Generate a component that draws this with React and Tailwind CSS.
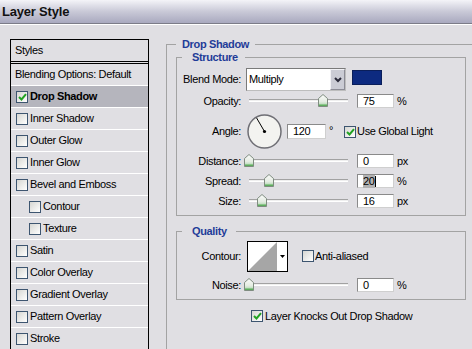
import React from 'react';

const styles = [
  { t: 'Drop Shadow', on: true, sel: true },
  { t: 'Inner Shadow' },
  { t: 'Outer Glow' },
  { t: 'Inner Glow' },
  { t: 'Bevel and Emboss' },
  { t: 'Contour', sub: true },
  { t: 'Texture', sub: true },
  { t: 'Satin' },
  { t: 'Color Overlay' },
  { t: 'Gradient Overlay' },
  { t: 'Pattern Overlay' },
  { t: 'Stroke' },
];

function Box({ on }) {
  return (
    <span className="w-[12px] h-[12px] shrink-0 border border-[#3d5570] bg-linear-to-br from-[#d6d6d2] to-white flex items-center justify-center">
      {on && (
        <svg width="9" height="8" viewBox="0 0 9 8">
          <path d="M1 4 L3.5 6.5 L8 1.2" fill="none" stroke="#22a323" strokeWidth="2" />
        </svg>
      )}
    </span>
  );
}

function Thumb() {
  return (
    <svg width="10" height="13" viewBox="0 0 10 13">
      <defs>
        <linearGradient id="thumbg" x1="0" y1="0" x2="0" y2="1">
          <stop offset="0" stopColor="#fbfbfa" />
          <stop offset="0.6" stopColor="#e4ece2" />
          <stop offset="1" stopColor="#9fd09f" />
        </linearGradient>
      </defs>
      <path d="M5 0.5 L9.5 4.5 V12.5 H0.5 V4.5 Z" fill="url(#thumbg)" stroke="#7f8c80" />
      <rect x="1" y="10.5" width="8" height="1.5" fill="#5fae5f" />
    </svg>
  );
}

function Slider({ at }) {
  return (
    <div className="relative ml-[3px] w-[104px] h-[14px] shrink-0">
      <div className="absolute left-[5px] right-0 top-[5px] h-[3px] border-t border-[#a2a2a2] border-b border-b-white bg-[#efefef]" />
      <div className="absolute top-0" style={{ left: Math.round(at * 99) }}>
        <Thumb />
      </div>
    </div>
  );
}

function Field({ w = 'w-[37px]', children, className = '' }) {
  return (
    <div className={`${w} h-[14px] shrink-0 bg-white border border-[#8a8a8a] border-b-[#cfcfcf] border-r-[#cfcfcf] pl-[5px] flex items-center ${className}`}>
      {children}
    </div>
  );
}

function Row({ label, className = '', children }) {
  return (
    <div className={`flex items-center ${className}`}>
      <div className="w-[64px] text-right shrink-0">{label}</div>
      {children}
    </div>
  );
}

function SliderRow({ label, at, value, unit, className }) {
  return (
    <Row label={label} className={`h-[14px] ${className}`}>
      <Slider at={at} />
      <Field className="ml-[9px]">{value}</Field>
      <span className="ml-[3px]">{unit}</span>
    </Row>
  );
}

export default function App() {
  return (
    <div className="w-[472px] h-[349px] overflow-hidden bg-[#e0dfe3] font-['Liberation_Sans',Arial,sans-serif] text-[11px] leading-[13px] tracking-[-0.35px] text-black">
      {/* Title */}
      <div className="h-[24px] bg-linear-to-b from-[#f4f4f8] via-[#c9c9d7] to-[#a9a9bf] border-b border-[#7c7c88] shadow-[0_1px_0_#ffffff] pl-[2px] flex items-center">
        <span className="text-[13px] font-bold tracking-[-0.2px] text-[#111]">Layer Style</span>
      </div>

      <div className="flex items-start">
        {/* Styles list */}
        <div className="ml-[10px] mt-[15px] w-[139px] shrink-0 border border-black">
          <div className="h-[21px] pl-[4px] flex items-center">Styles</div>
          <div className="border-b-[3px] border-double border-black" />
          <div className="h-[22px] pl-[4px] flex items-center border-b border-white">Blending Options: Default</div>
          {styles.map((s) => (
            <div
              key={s.t}
              className={`h-[22px] border-b border-white flex items-center gap-[2px] ${s.sub ? 'pl-[18px]' : 'pl-[5px]'} ${s.sel ? 'bg-[#b5b5bd] font-bold' : ''}`}
            >
              <Box on={s.on} />
              <span>{s.t}</span>
            </div>
          ))}
        </div>

        {/* Drop Shadow */}
        <fieldset className="ml-[17px] mt-[14px] w-[330px] h-[340px] shrink-0 border border-[#a3a3a3] pl-[9px]">
          <legend className="px-[6px] font-bold text-[#1f3c98]">Drop Shadow</legend>

          <fieldset className="w-[290px] border border-[#a3a3a3] pb-[7px]">
            <legend className="ml-[5px] pl-[10px] pr-[7px] font-bold text-[#1f3c98]">Structure</legend>

            <Row label="Blend Mode:" className="mt-[4px] h-[23px]">
              <div className="ml-[5px] w-[100px] h-[23px] shrink-0 bg-white border border-[#7a7a7a] border-b-[#bdbdbd] border-r-[#bdbdbd] flex">
                <div className="flex-1 pl-[2px] flex items-center">Multiply</div>
                <div className="w-[15px] h-full bg-[#cbccd5] border border-[#f2f2f6] border-b-[#8c8c96] border-r-[#8c8c96] flex items-center justify-center">
                  <svg width="8" height="6" viewBox="0 0 8 6">
                    <path d="M1 1 L4 4 L7 1" fill="none" stroke="#2a2a3a" strokeWidth="2" />
                  </svg>
                </div>
              </div>
              <div className="ml-[6px] self-start mt-[2px] w-[30px] h-[15px] bg-[#0d2a80] border border-[#0a1e5a]" />
            </Row>

            <SliderRow label="Opacity:" at={0.75} value="75" unit="%" className="mt-[3px]" />

            <Row label="Angle:" className="mt-[6px] h-[35px]">
              <svg className="ml-[6px] shrink-0" width="35" height="35" viewBox="0 0 35 35">
                <circle cx="17.5" cy="17.5" r="16.5" fill="#f3f3f0" stroke="#6f6f75" strokeWidth="1.5" />
                <line x1="17.5" y1="17.5" x2="9.5" y2="3.8" stroke="#000" strokeWidth="1" />
                <circle cx="17.5" cy="17.5" r="1.6" fill="#000" />
              </svg>
              <Field w="w-[39px]" className="ml-[5px] h-[15px]">120</Field>
              <span className="ml-[3px] self-start mt-[10px]">°</span>
              <span className="ml-[11px]"><Box on /></span>
              <span className="ml-[1px]">Use Global Light</span>
            </Row>

            <SliderRow label="Distance:" at={0} value="0" unit="px" className="mt-[5px]" />
            <Row label="Spread:" className="mt-[6px] h-[14px]">
              <Slider at={0.2} />
              <Field className="ml-[9px]">
                <span className="bg-[#b2b2b2]">20</span>
                <span className="w-[1px] h-[11px] bg-black" />
              </Field>
              <span className="ml-[3px]">%</span>
            </Row>
            <SliderRow label="Size:" at={0.13} value="16" unit="px" className="mt-[6px]" />
          </fieldset>

          <fieldset className="mt-[9px] w-[290px] border border-[#a3a3a3] pb-[7px]">
            <legend className="ml-[5px] pl-[10px] pr-[9px] font-bold text-[#1f3c98]">Quality</legend>

            <Row label="Contour:" className="mt-[3px] h-[31px]">
              <div className="ml-[6px] w-[41px] h-[31px] shrink-0 border border-black bg-white flex">
                <svg width="29" height="29" viewBox="0 0 29 29">
                  <polygon points="0,29 29,0 29,29" fill="#a6a6a6" />
                </svg>
                <div className="flex-1 flex items-center justify-center">
                  <svg width="5" height="3" viewBox="0 0 5 3">
                    <polygon points="0,0 5,0 2.5,3" fill="#000" />
                  </svg>
                </div>
              </div>
              <span className="ml-[14px] self-start mt-[9px]"><Box /></span>
              <span className="ml-[1px]">Anti-aliased</span>
            </Row>

            <SliderRow label="Noise:" at={0} value="0" unit="%" className="mt-[6px]" />
          </fieldset>

          <div className="mt-[10px] ml-[75px] flex items-center h-[12px]">
            <Box on />
            <span className="ml-[2px]">Layer Knocks Out Drop Shadow</span>
          </div>
        </fieldset>
      </div>
    </div>
  );
}
